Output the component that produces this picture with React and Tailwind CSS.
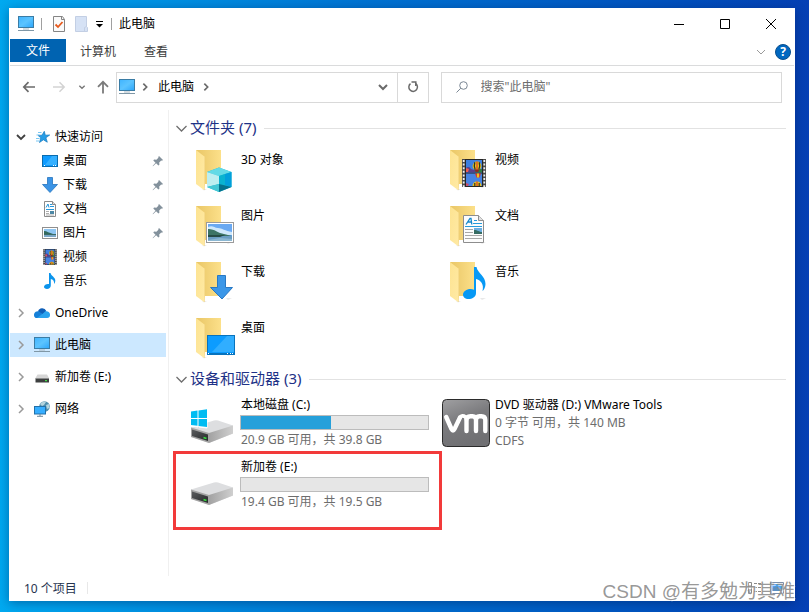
import React from 'react';

function Monitor({ className = 'h-4 w-4' }) {
  return (
    <svg viewBox="0 0 16 16" className={className} aria-hidden="true">
      <defs>
        <linearGradient id="screen" x1="0" y1="0" x2="1" y2="1">
          <stop offset="0" stopColor="#3fb4ff" />
          <stop offset="0.5" stopColor="#5cc4ff" />
          <stop offset="1" stopColor="#2ba5fb" />
        </linearGradient>
      </defs>
      <rect x="0.5" y="0.5" width="15" height="11" fill="url(#screen)" stroke="#3a7ca5" />
      <path d="M5 13h6" stroke="#a9b8c2" />
      <path d="M0 14.5h16" stroke="#7f97a6" />
    </svg>
  );
}

function Desktop() {
  return (
    <svg viewBox="0 0 16 16" className="h-4 w-4" aria-hidden="true">
      <rect x="0.5" y="2.5" width="15" height="11" fill="#0f9bff" stroke="#0a6cae" />
      <path d="M10 3h5v9H3z" fill="#35b0ff" />
      <path d="M2 12.5h1M11 12.5h1M13 12.5h1" stroke="#fff" />
    </svg>
  );
}

function DownArrow() {
  return (
    <svg viewBox="0 0 16 16" className="h-4 w-4" aria-hidden="true">
      <path d="M5.5.5h5v7h5L8 15.5.5 7.5h5z" fill="#3b94e6" stroke="#2573bd" strokeWidth="0.8" />
    </svg>
  );
}

function Page() {
  return (
    <svg viewBox="0 0 16 16" className="h-4 w-4" aria-hidden="true">
      <path d="M2.5.5h8l3 3v12h-11z" fill="#fff" stroke="#8b8b8b" />
      <path d="M10.500.5v3h3" fill="#e3e3e3" stroke="#8b8b8b" />
      <path d="M4 6.500 6 3l1 3.500M8 3.500h2M8 5.500h4M4 8.500h8" fill="none" stroke="#2597dc" />
      <path d="M4 10.500h3M4 12.500h3M4 14h8" stroke="#9a9a9a" strokeWidth="0.8" />
      <rect x="8" y="10" width="4" height="3" fill="#4c87a5" />
    </svg>
  );
}

function Picture() {
  return (
    <svg viewBox="0 0 16 16" className="h-4 w-4" aria-hidden="true">
      <rect x="0.5" y="2.500" width="15" height="11" fill="#fff" stroke="#8f8f8f" />
      <rect x="2" y="4" width="12" height="8" fill="#8fc6f2" />
      <path d="M2 6c3 0 5 2 9 3H2z" fill="#31685d" />
      <path d="M2 9h12v3H2z" fill="#7aa6c6" />
      <path d="M2 9h12v1H2z" fill="#3c6c66" />
    </svg>
  );
}

function Balloon({ x, y }) {
  return (
    <g transform={`translate(${x} ${y})`}>
      <circle cx="0" cy="0" r="4.400" fill="#e9c31b" />
      <path d="M-2.200-3.800Q-3.400 0-1.800 3.800M2.200-3.800Q3.400 0 1.800 3.800" fill="none" stroke="#2f3323" strokeWidth="1.300" />
      <path d="M-.6-4.400h1.200v8.400h-1.200z" fill="#d93a27" />
      <path d="M-2.500 3.500h5L1 6h-2z" fill="#8e2b23" />
    </g>
  );
}

function FilmBody() {
  return (
    <>
      <rect width="24" height="28" fill="#4a4a4a" />
      <path d="M1.700 1v27M22.300 1v27" stroke="#efefef" strokeWidth="1.800" strokeDasharray="2 1.600" />
      <rect x="3" y="0" width="18" height="28" fill="#262626" />
      <rect x="4" y="1" width="16" height="12.500" fill="#3d7fe0" />
      <rect x="4" y="14.500" width="16" height="12.500" fill="#4783e2" />
      <path d="M4 9c2-2 4-1 5 1l3 1 8-1v3.500H4z" fill="#58408a" />
      <path d="M4 9l3 1-1 3H4z" fill="#ef5b53" />
      <path d="M14 11l6-1v3.500h-7z" fill="#2c7e45" />
      <Balloon x="15" y="7" />
      <path d="M13 14.500h6l-1.500 4h-3z" fill="#d93a27" />
      <path d="M15 14.500h2v4h-2z" fill="#e9c31b" />
      <path d="M10.500 27a4.500 4.500 0 0 1 9 0z" fill="#e9c31b" />
      <path d="M12.800 24v3M17.200 24v3" stroke="#2f3323" strokeWidth="1.200" />
      <path d="M15 22.500V27" stroke="#d93a27" strokeWidth="1.200" />
      <path d="M4 24l3 1-1 2H4z" fill="#c74e6a" />
    </>
  );
}

function Film() {
  return (
    <svg viewBox="-2 0 28 28" className="h-4 w-4" aria-hidden="true">
      <FilmBody />
    </svg>
  );
}

function Note() {
  return (
    <svg viewBox="0 0 16 16" className="h-4 w-4" aria-hidden="true">
      <path d="M7 0h1.500c.5 3 4.800 4 4.800 7.500 0 1.500-.5 2.700-1.300 3.500.5-3-1-4.500-3.200-5v6.600C8.800 14.600 7 16 5 16c-1.800 0-3-.9-3-2.200C2 12.100 4 11 6 11c.4 0 .7 0 1 .1z" fill="#0b94ec" />
    </svg>
  );
}

function QuickStar() {
  return (
    <svg viewBox="0 0 16 16" className="h-4 w-4" aria-hidden="true">
      <path d="m9.300 2.300 1 3.900 4.400-.2-3.800 2.800 1.400 4.400-3.900-2.400-3.900 2.700 1.300-4.700L3 6.400l4-.2z" fill="#269de6" stroke="#1479bf" strokeWidth="0.700" />
      <path d="M3 3.500h3.500M1.500 6h3M1 9.500h3.500M1 12h3" stroke="#7ac8f3" strokeWidth="1.200" />
    </svg>
  );
}

function Cloud() {
  return (
    <svg viewBox="0 0 16 16" className="h-4 w-4" aria-hidden="true">
      <path d="M4 6.500A4.400 4.400 0 0 1 12.300 6L9 10z" fill="#0f5fb8" />
      <path d="M0 10.200a3.700 3.700 0 0 1 5.500-3.500L13 13H3.200A3 3 0 0 1 0 10.200" fill="#1680d8" />
      <path d="M11.500 6.300a3.500 3.500 0 0 1 4.500 3.600A3 3 0 0 1 12.900 13H3l6.500-5z" fill="#2aa3ee" />
    </svg>
  );
}

function SmallDrive() {
  return (
    <svg viewBox="0 0 16 16" className="h-4 w-4" aria-hidden="true">
      <path d="M3.500 5.500h9.500l2 3.500v.5H1.500V9z" fill="#d6d6d6" />
      <path d="M1.500 9.500h13.500v4H1.500z" fill="#3d3f3f" />
      <path d="M1.500 9.500h13.500" stroke="#8a8a8a" strokeWidth="0.700" />
      <rect x="11" y="11" width="2" height="1.200" fill="#43df49" />
    </svg>
  );
}

function Network() {
  return (
    <svg viewBox="0 0 16 16" className="h-4 w-4" aria-hidden="true">
      <circle cx="10.500" cy="5.500" r="5.300" fill="#4f8fad" />
      <path d="M6 3c2-2 4-3 6-2L10 4 8 5zM12 4l3-1 .6 4L13 8z" fill="#b4d4de" />
      <rect x="0.500" y="5.500" width="11" height="7.500" fill="#36aeff" stroke="#2370a8" />
      <path d="M3 15.300h6M6 13v2" stroke="#6d8797" />
    </svg>
  );
}

function Pin() {
  return (
    <svg viewBox="0 0 12 12" className="h-3 w-3" aria-hidden="true">
      <path d="m7 1 4 4-1 .7-.8-.2-2 2 .2 2.300-1 .8-2.300-2.300L1 11.300l-.4-.4L3.500 7.800 1.300 5.600l.8-1 2.300.2 2-2L6.300 2z" fill="#83919c" />
    </svg>
  );
}

function Chevron({ dir, className }) {
  const paths = {
    right: 'M4 2l4 4-4 4',
    down: 'M2 4l4 4 4-4',
  };
  return (
    <svg viewBox="0 0 12 12" className={className} fill="none" stroke="currentColor" aria-hidden="true">
      <path d={paths[dir]} />
    </svg>
  );
}

function Folder({ children }) {
  return (
    <svg viewBox="0 0 48 48" className="h-12 w-12 shrink-0" aria-hidden="true">
      <defs>
        <linearGradient id="folderBack" x1="0" y1="0" x2="1" y2="0">
          <stop offset="0" stopColor="#e9c666" />
          <stop offset="1" stopColor="#fce08a" />
        </linearGradient>
        <linearGradient id="folderFront" x1="0" y1="0" x2="1" y2="1">
          <stop offset="0" stopColor="#fde391" />
          <stop offset="1" stopColor="#ffeaa5" />
        </linearGradient>
      </defs>
      <path d="M14 42h5l-3 1.500zM38 39h6l-4 2z" fill="#e8e8e8" />
      <path d="M8 3h25v34H16z" fill="url(#folderBack)" />
      <path d="M8 3l9 7v27l-1 6-8-6z" fill="url(#folderFront)" />
      <path d="M16.500 10v33" stroke="#f2d480" strokeWidth="0.600" />
      {children}
    </svg>
  );
}

const overlays = {
  objects: (
    <>
      <path d="M31 20.500 43.500 25v15L31 45l-12-5V25z" fill="#18b9d1" />
      <path d="M31 20.500 43.500 25 31 29l-12-4z" fill="#63dae6" />
      <path d="M19 25l12 4v8l-12 3z" fill="#bdeef0" />
      <path d="M31 29l6-2v12l-6-2z" fill="#0ab3d0" />
      <path d="M37 27l6.500-2v15L37 38z" fill="#029fdb" />
      <path d="M31 37l12.500 3L31 45z" fill="#05728d" />
      <path d="M31 37v8l-12-5z" fill="#45c8d5" />
    </>
  ),
  video: (
    <g transform="translate(20 12)">
      <FilmBody />
    </g>
  ),
  pictures: (
    <>
      <rect x="18.500" y="19.500" width="27" height="20" fill="#fff" stroke="#9b9b9b" />
      <rect x="20" y="21" width="24" height="17" fill="#6aa9f2" />
      <path d="M20 24c5-2 6 1 10 1s7 3 14 4v3H20z" fill="#cfe8fb" />
      <path d="M20 26c4-.5 8 2 12 4l12 3H20z" fill="#3c7465" />
      <path d="M20 33h24v5H20z" fill="#6a9dc2" />
      <path d="M20 32h17l-5 2H20z" fill="#264c45" />
      <path d="M20 37l12-2 12 1v2H20z" fill="#8bb7d2" />
    </>
  ),
  documents: (
    <>
      <path d="M21.500 12.500h15l5 5v22h-20z" fill="#fcfcfc" stroke="#8d8d8d" />
      <path d="M36.500 12.500v5h5" fill="#e1e1e1" stroke="#8d8d8d" />
      <path d="M24 21.500l4-6h1l.8 6M25.800 19h3.500" fill="none" stroke="#1688cc" strokeWidth="1.300" />
      <path d="M32 17.500h3M31 20.500h9M23 23.500h17" stroke="#259bdc" />
      <path d="M23 26.500h8M23 29.500h8M23 32.500h17M23 35.500h17" stroke="#a7a7a7" />
      <rect x="32" y="25" width="8" height="6" fill="#6caee0" />
      <path d="M32 27c4 0 5 2 8 2v2h-8z" fill="#356b62" />
    </>
  ),
  downloads: <path d="M29.500 16.500h8v12h7L34 40 22.500 28.500h7z" fill="#3b97e8" stroke="#2878c4" />,
  music: (
    <path d="M32 8h2.500c1 6 9 9 9 17 0 3-1.500 6-3 7 1.800-7-2-11-6.500-12v14c0 4-4 6-7.500 6-3.500 0-5.500-2-5.500-4.500 0-3 3.500-5.500 7.500-5.500 1.200 0 2.500.2 3.500.7z" fill="#0799f5" />
  ),
  desktop: (
    <>
      <rect x="19.500" y="20.500" width="27" height="19" fill="#0c9cff" stroke="#0873bd" />
      <path d="M39 21h7v16H24z" fill="#31aeff" />
      <path d="M20 38.500h26" stroke="#0873bd" />
      <path d="M20 38.500h1M39 38.500h1M42 38.500h1M44 38.500h1" stroke="#fff" />
    </>
  ),
};

function Drive({ windows }) {
  return (
    <svg viewBox="0 0 48 48" className="h-12 w-12" aria-hidden="true">
      <defs>
        <linearGradient id="driveSide" x1="0" y1="0" x2="1" y2="0">
          <stop offset="0" stopColor="#a2a2a2" />
          <stop offset="1" stopColor="#cfcfcf" />
        </linearGradient>
        <linearGradient id="driveFront" x1="0" y1="0" x2="1" y2="1">
          <stop offset="0" stopColor="#5a5c5e" />
          <stop offset="1" stopColor="#26282a" />
        </linearGradient>
      </defs>
      <g transform="translate(0 1)">
        <path d="M3 27.500 26 20.500q2-.5 4 0l15 5v8L21 43 3 37z" fill="#dddee0" />
        <path d="M21 33l24-7.500v8L21 43z" fill="url(#driveSide)" />
        <path d="M3 27.500l18 5.500v10L3 37z" fill="#a3a3a3" />
        <path d="M4 29.500l16 5v6.500L4 36z" fill="url(#driveFront)" />
        <path d="M15.500 37.500l3 1" stroke="#35e03e" strokeWidth="1.600" />
      </g>
      {windows && (
        <>
          <path d="M3 13l7-1v7.500H3zM11 12l8-1.200v8.700h-8zM3 20.500h7V28l-7-1zM11 20.500h8V29l-8-1z" fill="#fff" stroke="#fff" />
          <path d="M3 12.500l6.500-.9v7.400H3zM10.500 11.500l8.500-1.200V19h-8.500zM3 20h6.500v6.800L3 26zM10.500 20H19v8l-8.500-1.100z" fill="#00bcf2" />
        </>
      )}
    </svg>
  );
}

function VmwareDisc() {
  return (
    <svg viewBox="0 0 48 48" className="h-12 w-12" aria-hidden="true">
      <defs>
        <linearGradient id="vmTile" x1="0" y1="0" x2="0.400" y2="1">
          <stop offset="0" stopColor="#a0a0a2" />
          <stop offset="0.500" stopColor="#7b7b7e" />
          <stop offset="1" stopColor="#707073" />
        </linearGradient>
      </defs>
      <rect x="0.500" y="0.500" width="47" height="47" rx="4" fill="url(#vmTile)" stroke="#2b2b2b" />
      <path
        d="M4.200 18 9.500 30q1.500 3 3 0L18 18.500M24.500 32V21q0-3.800 4-3.800h2q3.500 0 3.500 3.800v11M34 21q0-3.800 3.500-3.800h2q3.800 0 3.800 3.800v11"
        fill="none"
        stroke="#fff"
        strokeWidth="4.400"
        strokeLinecap="round"
        strokeLinejoin="round"
      />
      <path d="M18 18.500q2-3 5.500-.5l1 3" fill="none" stroke="#fff" strokeWidth="3.600" strokeLinecap="round" />
    </svg>
  );
}

const quickItems = [
  { name: '桌面', icon: <Desktop />, pinned: true },
  { name: '下载', icon: <DownArrow />, pinned: true },
  { name: '文档', icon: <Page />, pinned: true },
  { name: '图片', icon: <Picture />, pinned: true },
  { name: '视频', icon: <Film /> },
  { name: '音乐', icon: <Note /> },
];

const roots = [
  { name: 'OneDrive', icon: <Cloud /> },
  { name: '此电脑', icon: <Monitor />, selected: true },
  { name: '新加卷 (E:)', icon: <SmallDrive /> },
  { name: '网络', icon: <Network /> },
];

const folders = [
  { name: '3D 对象', kind: 'objects' },
  { name: '视频', kind: 'video' },
  { name: '图片', kind: 'pictures' },
  { name: '文档', kind: 'documents' },
  { name: '下载', kind: 'downloads' },
  { name: '音乐', kind: 'music' },
  { name: '桌面', kind: 'desktop' },
];

function TitleBar() {
  return (
    <header className="flex h-[30px] items-center pl-2">
      <Monitor className="h-4 w-4" />
      <span className="ml-[7px] h-3 w-px bg-[#a0a0a0]" />
      <button aria-label="属性" className="ml-[9px]">
        <svg viewBox="0 0 16 16" className="h-4 w-4" aria-hidden="true">
          <path d="M2.500.5h9l2 3v12h-11z" fill="#fafafa" stroke="#858585" />
          <path d="M10.500.5v3h3" fill="none" stroke="#858585" />
          <path d="M4.500 8.500 7 11l4.500-5" fill="none" stroke="#e65a1e" strokeWidth="1.800" />
        </svg>
      </button>
      <button aria-label="新建文件夹" className="ml-[7px]">
        <svg viewBox="0 0 16 16" className="h-4 w-4" aria-hidden="true">
          <path d="M1.500.5h11v10l1 1v4h-12z" fill="#d6e2f5" stroke="#c3cfe4" />
          <path d="M10.500 15.500v-4l2-1" fill="none" stroke="#c3cfe4" />
        </svg>
      </button>
      <button aria-label="自定义快速访问工具栏" className="ml-[5px]">
        <svg viewBox="0 0 8 8" className="h-2 w-2" aria-hidden="true">
          <path d="M1 1.500h7" stroke="#000" />
          <path d="M1 4h7L4.500 7.500z" />
        </svg>
      </button>
      <span className="ml-2 h-3 w-px bg-[#a0a0a0]" />
      <h1 className="ml-[7px] flex-1">此电脑</h1>
      <button aria-label="最小化" className="flex h-full w-[46px] items-center justify-center">
        <svg viewBox="0 0 10 10" className="h-[10px] w-[10px]" stroke="#000"><path d="M0 5.500h10" /></svg>
      </button>
      <button aria-label="最大化" className="flex h-full w-[46px] items-center justify-center">
        <svg viewBox="0 0 10 10" className="h-[10px] w-[10px]" fill="none" stroke="#000"><path d="M.5.5h9v9h-9z" /></svg>
      </button>
      <button aria-label="关闭" className="flex h-full w-[46px] items-center justify-center">
        <svg viewBox="0 0 10 10" className="h-[10px] w-[10px]" stroke="#000"><path d="M0 0l10 10M10 0 0 10" /></svg>
      </button>
    </header>
  );
}

function Ribbon() {
  return (
    <div className="flex h-[27px] items-start border-b border-[#dadbdc] text-[#3a3a3a]">
      <button className="h-[23px] bg-[#0063b1] px-4 text-white">文件</button>
      <button className="h-6 px-[14px] pt-px">计算机</button>
      <button className="h-6 px-[14px] pt-px">查看</button>
      <div className="ml-auto flex h-[26px] items-center gap-2 pr-[3px]">
        <button aria-label="展开功能区"><Chevron dir="down" className="h-3 w-3 text-[#9a9a9a]" /></button>
        <button aria-label="帮助" className="h-4 w-4 rounded-full border border-[#0a4f8e] bg-[#0067c0] text-center leading-[14px] font-bold text-white">
          ?
        </button>
      </div>
    </div>
  );
}

function AddressRow() {
  return (
    <div className="flex h-[42px] items-center pr-3 text-[#6a6a6a]">
      <button aria-label="后退" className="ml-3">
        <svg viewBox="0 0 14 14" className="h-[14px] w-[14px]" fill="none" stroke="#6b6b6b" strokeWidth="1.700"><path d="M13 7H2M6.500 2.200 1.800 7l4.700 4.800" /></svg>
      </button>
      <button aria-label="前进" className="ml-4" disabled>
        <svg viewBox="0 0 14 14" className="h-[14px] w-[14px]" fill="none" stroke="#d3d3d3" strokeWidth="1.500"><path d="M1 7h11M7.500 2.200 12.200 7l-4.700 4.800" /></svg>
      </button>
      <button aria-label="最近浏览的位置" className="ml-3">
        <Chevron dir="down" className="h-2 w-2 stroke-2 text-[#777]" />
      </button>
      <button aria-label="上移" className="ml-[10px]">
        <svg viewBox="0 0 14 14" className="h-[14px] w-[14px]" fill="none" stroke="#7b7b7b" strokeWidth="1.800"><path d="M7 13.500V2M2 6.800 7 1.800l5 5" /></svg>
      </button>
      <div className="ml-[6px] flex h-[31px] flex-[309_1_0%] items-center border border-[#d9d9d9] pl-[2px]">
        <Monitor className="h-4 w-4" />
        <Chevron dir="right" className="ml-[5px] h-[10px] w-[10px] stroke-2" />
        <button className="ml-[8px] text-black">此电脑</button>
        <Chevron dir="right" className="ml-[7px] h-[10px] w-[10px] stroke-2" />
        <button aria-label="以前的位置" className="mr-[8px] ml-auto">
          <Chevron dir="down" className="h-3 w-3 stroke-2" />
        </button>
        <button aria-label="刷新" className="flex h-full w-[31px] items-center justify-center border-l border-[#d9d9d9]">
          <svg viewBox="0 0 12 12" className="h-3 w-3" fill="none" stroke="#6a6a6a" strokeWidth="1.500">
            <path d="M8.500 2.500A4.300 4.300 0 1 1 3.500 2.700" />
            <path d="M4.500 1h4.300v4" />
          </svg>
        </button>
      </div>
      <label className="ml-3 flex h-[31px] flex-[326_1_0%] items-center border border-[#d9d9d9] pl-[14px]">
        <svg viewBox="0 0 12 12" className="h-3 w-3 shrink-0" fill="none" stroke="#7b8794"><circle cx="7.500" cy="4.500" r="3.800" /><path d="M4.800 7.200.5 11.500" /></svg>
        <input type="search" aria-label="搜索" placeholder={'搜索"此电脑"'} className="ml-[13px] min-w-0 flex-1 outline-none placeholder:text-[#6d6d6d]" />
      </label>
    </div>
  );
}

function Sidebar() {
  return (
    <nav aria-label="导航窗格" className="w-[159px] shrink-0 border-r border-[#f0f0f0] pt-[15px] pr-[2px]">
      <a href="#quick" className="flex h-6 items-center pl-[5px]">
        <Chevron dir="down" className="h-3 w-3 stroke-[1.8px] text-[#404040]" />
        <span className="ml-[8px]"><QuickStar /></span>
        <span className="ml-[4px]">快速访问</span>
      </a>
      {quickItems.map((item) => (
        <a key={item.name} href="#folder" className="flex h-6 items-center pr-[2px] pl-8">
          {item.icon}
          <span className="ml-[5px] flex-1">{item.name}</span>
          {item.pinned && <Pin />}
        </a>
      ))}
      {roots.map((item) => (
        <a
          key={item.name}
          href="#root"
          className={`mt-2 flex h-6 items-center pl-[5px] ${item.selected ? 'bg-[#cce8ff]' : ''}`}
        >
          <Chevron dir="right" className="h-3 w-3 stroke-[1.5px] text-[#9a9a9a]" />
          <span className="ml-[7px]">{item.icon}</span>
          <span className="ml-[5px]">{item.name}</span>
        </a>
      ))}
    </nav>
  );
}

function GroupHeading({ children }) {
  return (
    <h2 className="flex h-6 items-center text-[15px] leading-[22px] text-[#1e3287]">
      <Chevron dir="down" className="mr-px -ml-[2px] h-[15px] w-[15px] text-[#6e6e6e]" />
      <span className="pb-[2px]">{children}</span>
      <span className="ml-2 h-px flex-1 bg-[#e2e2e2]" />
    </h2>
  );
}

function UsageBar({ label, percent }) {
  return (
    <div
      role="progressbar"
      aria-label={label}
      aria-valuenow={percent}
      className="mt-px mb-px h-[15px] w-[189px] border border-[#bcbcbc] bg-[#e6e6e6]"
    >
      <div className="h-full bg-[#26a0da]" style={{ width: `${percent}%` }} />
    </div>
  );
}

function DriveTile({ icon, name, children, marked }) {
  return (
    <button className="relative flex h-[62px] items-start text-left leading-[18px]">
      <span className="mt-[3px] mr-1 shrink-0">{icon}</span>
      <span className="whitespace-nowrap text-[#6d6d6d]">
        <span className="block pl-px text-black">{name}</span>
        {children}
      </span>
      {marked && <span className="absolute -top-[7px] -left-[15px] h-[79px] w-[269px] border-3 border-[#f23a3a]" />}
    </button>
  );
}

function Content() {
  return (
    <main className="min-w-0 flex-1 pt-[6px] pr-2 pl-[7px]">
      <GroupHeading>文件夹 (7)</GroupHeading>
      <div className="mt-[3px] grid grid-cols-[repeat(auto-fill,254px)] pl-3">
        {folders.map((folder) => (
          <button key={folder.kind} className="flex h-14 items-start pt-1 text-left">
            <Folder>{overlays[folder.kind]}</Folder>
            <span className="mt-1 ml-[5px] leading-[18px]">{folder.name}</span>
          </button>
        ))}
      </div>
      <GroupHeading>设备和驱动器 (3)</GroupHeading>
      <div className="mt-[5px] grid grid-cols-[repeat(auto-fill,254px)] pl-3">
        <DriveTile icon={<Drive windows />} name="本地磁盘 (C:)">
          <UsageBar label="本地磁盘 (C:)" percent={48} />
          <span className="block pl-px">20.9 GB 可用，共 39.8 GB</span>
        </DriveTile>
        <DriveTile icon={<VmwareDisc />} name="DVD 驱动器 (D:) VMware Tools">
          <span className="block pl-px">0 字节 可用，共 140 MB</span>
          <span className="block pl-px">CDFS</span>
        </DriveTile>
        <DriveTile icon={<Drive />} name="新加卷 (E:)" marked>
          <UsageBar label="新加卷 (E:)" percent={0} />
          <span className="block pl-px">19.4 GB 可用，共 19.5 GB</span>
        </DriveTile>
      </div>
    </main>
  );
}

function StatusBar() {
  return (
    <footer className="flex h-6 items-center pr-[10px] pl-[14px] text-[#26344f]">
      <span className="pt-px">10 个项目</span>
      <span className="ml-[10px] h-3 w-px bg-[#e8e8e8]" />
      <button aria-label="详细信息" className="ml-auto">
        <svg viewBox="0 0 14 12" className="h-3 w-[14px]" fill="none" stroke="#8a8a8a"><path d="M.5.500h3v11h-3zM.5 4h3M.5 8h3M6 1.500h3M10 1.500h3M6 5.500h3M10 5.500h3M6 9.500h3M10 9.500h3" /></svg>
      </button>
      <button aria-label="大图标" className="ml-2">
        <svg viewBox="0 0 14 12" className="h-3 w-[14px]"><path d="M.5.500h13v11H.5z" fill="#fff" stroke="#7b8ea8" /><path d="M2 2h10v7H2z" fill="#4da3f5" /><path d="M2 6l4-2 6 4v1H2z" fill="#5a8fc4" /></svg>
      </button>
    </footer>
  );
}

export default function App() {
  return (
    <div className="relative flex min-h-screen bg-linear-to-r from-[#00a9f0] via-[#0074d3] via-45% to-[#0540b4] pt-2 pr-[14px] pb-[11px] pl-[9px] font-['Noto_Sans','Noto_Sans_CJK_SC',sans-serif] text-xs text-black">
      <div className="flex min-w-0 flex-1 flex-col bg-white p-px shadow-[0_2px_10px_rgba(0,20,70,0.4)]">
        <TitleBar />
        <Ribbon />
        <AddressRow />
        <div className="flex flex-1 pt-[2px]">
          <Sidebar />
          <Content />
        </div>
        <StatusBar />
      </div>
      <p className="absolute right-[14px] bottom-[6px] font-['Liberation_Sans','Noto_Sans_CJK_SC',sans-serif] text-[19px] leading-7 whitespace-nowrap text-[#8b8b8b]/90 [text-shadow:1px_1px_0_rgba(255,255,255,0.6)]">
        CSDN @有多勉为其难
      </p>
    </div>
  );
}
